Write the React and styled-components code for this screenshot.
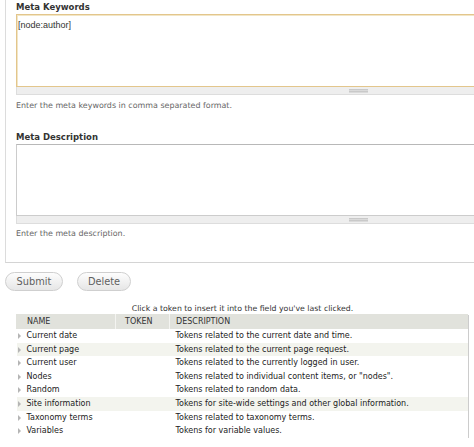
import React from "react";
import styled, { createGlobalStyle } from "styled-components";

const Global = createGlobalStyle`
  html, body { margin: 0; padding: 0; background: #fff; overflow: hidden; }
  body { font-family: "DejaVu Sans", Verdana, sans-serif; color: #333; }
`;

const Page = styled.div`
  width: 900px;
  padding-left: 5px;
`;

const Fieldset = styled.div`
  border-left: 1px solid #dcdcdc;
  border-bottom: 1px solid #d4d4d4;
  padding: 0 0 23px 10px;
`;

const FormItem = styled.div`
  margin-top: ${(p) => p.$gap || 0}px;
`;

const Label = styled.label`
  display: block;
  height: 13px;
  padding-top: 1px;
  line-height: 13px;
  font-size: 8.5px;
  font-weight: bold;
  color: #333;
`;

const TextArea = styled.div`
  box-sizing: border-box;
  width: 685px;
  height: ${(p) => p.$h}px;
  padding: 5px 1px;
  font-family: "Liberation Sans", Arial, sans-serif;
  font-size: 9px;
  line-height: 10px;
  color: #333;
  background: #fff;
  border: 1px solid ${(p) => (p.$focus ? "#e3c68c" : "#ccc")};
  border-top-color: ${(p) => (p.$focus ? "#e3c68c" : "#b8b8b8")};
  box-shadow: ${(p) => (p.$focus ? "inset 0 1px 0 #f2e6c6, inset 1px 0 0 #f2e6c6" : "none")};
`;

const Grippie = styled.div`
  box-sizing: border-box;
  width: 685px;
  height: 8px;
  background: #eee;
  border: 1px solid #ddd;
  border-top: none;
  display: flex;
  justify-content: center;
  align-items: center;
`;

const Handle = styled.span`
  display: block;
  width: 19px;
  height: 4px;
  background: repeating-linear-gradient(#c9c9c9 0 1px, #dadada 1px 2px);
`;

const Description = styled.div`
  margin-top: ${(p) => p.$mt}px;
  font-size: 7.95px;
  line-height: 11px;
  color: #666;
`;

const Actions = styled.div`
  display: flex;
  gap: 14px;
  margin-top: 9px;
`;

const Button = styled.button`
  box-sizing: border-box;
  width: ${(p) => p.$w}px;
  height: 19px;
  padding: 0;
  border: 1px solid #cfcfcf;
  border-radius: 10px;
  background: linear-gradient(#fdfdfd, #e6e6e6);
  color: #5f5f5f;
  font-family: "DejaVu Sans", Verdana, sans-serif;
  font-size: 9.8px;
  line-height: 17px;
  text-align: center;
`;

const TokenArea = styled.div`
  margin-left: 11px;
  width: 453px;
`;

const Help = styled.div`
  margin-top: 12px;
  height: 11px;
  line-height: 11px;
  font-size: 7.8px;
  color: #333;
  text-align: center;
`;

const Table = styled.table`
  width: 452px;
  border-collapse: collapse;
  table-layout: fixed;
  font-size: 8px;
  color: #222;
  box-shadow: 1px 1px 0 #ccc;
`;

const Th = styled.th`
  box-sizing: border-box;
  height: 15px;
  padding: 0 0 0 ${(p) => p.$pl}px;
  background: #e1e2dc;
  border-left: 1px solid ${(p) => (p.$first ? "#e1e2dc" : "#f4f4f1")};
  text-align: left;
  font-weight: normal;
  text-transform: uppercase;
  color: #333;
  width: ${(p) => p.$w || "auto"};
`;

const Tr = styled.tr`
  height: 13.6px;
  background: ${(p) => (p.$shade ? "#f3f4ee" : "#fff")};
`;

const Td = styled.td`
  padding: 0 0 0 ${(p) => p.$pl}px;
  line-height: 13.6px;
  white-space: nowrap;
  overflow: hidden;
  position: relative;
`;

const Expander = styled.span`
  position: absolute;
  left: 1px;
  top: 4px;
  width: 0;
  height: 0;
  border-top: 3px solid transparent;
  border-bottom: 3px solid transparent;
  border-left: 3px solid #b5b5b5;
`;

const rows = [
  ["Current date", "Tokens related to the current date and time.", false],
  ["Current page", "Tokens related to the current page request.", true],
  ["Current user", "Tokens related to the currently logged in user.", false],
  ["Nodes", 'Tokens related to individual content items, or "nodes".', false],
  ["Random", "Tokens related to random data.", false],
  ["Site information", "Tokens for site-wide settings and other global information.", true],
  ["Taxonomy terms", "Tokens related to taxonomy terms.", false],
  ["Variables", "Tokens for variable values.", false],
];

export default function App() {
  return (
    <>
      <Global />
      <Page>
        <Fieldset>
          <FormItem>
            <Label>Meta Keywords</Label>
            <TextArea $h={73} $focus>[node:author]</TextArea>
            <Grippie>
              <Handle />
            </Grippie>
            <Description $mt={5}>Enter the meta keywords in comma separated format.</Description>
          </FormItem>
          <FormItem $gap={19}>
            <Label>Meta Description</Label>
            <TextArea $h={72} />
            <Grippie>
              <Handle />
            </Grippie>
            <Description $mt={4}>Enter the meta description.</Description>
          </FormItem>
        </Fieldset>
        <Actions>
          <Button $w={58}>Submit</Button>
          <Button $w={54}>Delete</Button>
        </Actions>
        <TokenArea>
          <Help>Click a token to insert it into the field you've last clicked.</Help>
          <Table>
            <thead>
              <tr>
                <Th $first $pl={10} $w="99px">Name</Th>
                <Th $pl={9} $w="54px">Token</Th>
                <Th $pl={6}>Description</Th>
              </tr>
            </thead>
            <tbody>
              {rows.map(([name, desc, shade]) => (
                <Tr key={name} $shade={shade}>
                  <Td $pl={10}>
                    <Expander />
                    {name}
                  </Td>
                  <Td $pl={9} />
                  <Td $pl={6}>{desc}</Td>
                </Tr>
              ))}
            </tbody>
          </Table>
        </TokenArea>
      </Page>
    </>
  );
}
